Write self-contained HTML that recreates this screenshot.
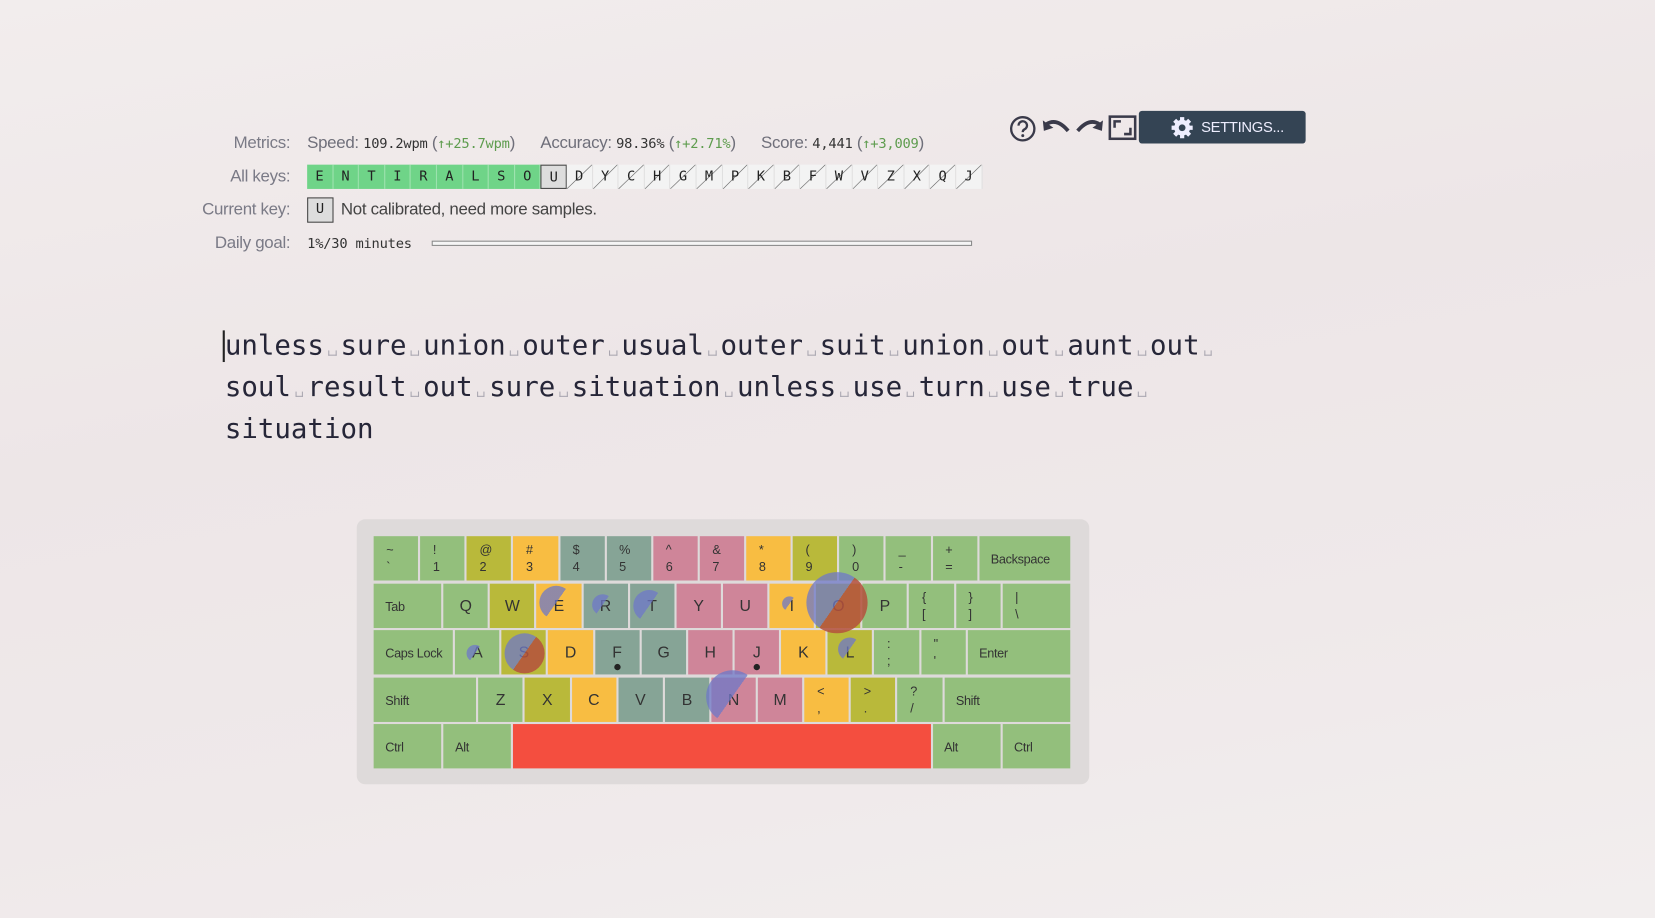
<!DOCTYPE html>
<html><head><meta charset="utf-8"><style>
html,body{margin:0;padding:0;width:1655px;height:918px;overflow:hidden;background:#efe9ea;}
#w{position:absolute;left:0;top:0;width:1568px;height:870px;transform:scale(1.05548);transform-origin:0 0;
background:linear-gradient(170deg,#f2eded 0%,#ede6e7 40%,#efe9ea 70%,#f2eeee 100%);font-family:"Liberation Sans",sans-serif;}
.lbl{position:absolute;right:1293px;font-size:16px;color:#7a7a86;white-space:nowrap;letter-spacing:-0.3px;}
.row{position:absolute;left:291px;font-size:15px;color:#6f6f7a;white-space:nowrap;letter-spacing:-0.3px;}
.mono{font-family:"DejaVu Sans Mono","Liberation Mono",monospace;font-size:13px;color:#333;letter-spacing:-0.2px;}
.g{color:#5e9c4e}
.k{position:absolute;top:156px;width:24.5px;height:23px;box-sizing:border-box;font-family:"DejaVu Sans Mono",monospace;font-size:13px;line-height:23px;text-align:center;color:#222;}
.kg{background:#6fd488;border-right:1px solid #9fe3b0;}
.kh{background:linear-gradient(to bottom right,#f3f3f3 calc(50% - 0.6px),#666 50%,#f3f3f3 calc(50% + 0.6px));border-right:1px solid #e0e0e0;}
.ku{background:#ddd;border:1px solid #444;}
#txt{position:absolute;left:213px;top:309px;font-family:"DejaVu Sans Mono",monospace;font-size:26px;line-height:39.3px;color:#262638;white-space:pre;}
.s{display:inline-block;width:15.65px;height:10px;position:relative;}
.s:after{content:"";position:absolute;left:4px;right:4px;bottom:-1px;height:4px;border:1.5px solid #a9a6b0;border-top:none;}
#kb{position:absolute;left:338px;top:492px;width:694px;height:251px;background:#dedada;border-radius:8px;}
.key{position:absolute;height:42px;box-sizing:border-box;font-family:"Liberation Sans",sans-serif;color:#333;overflow:hidden;}
.key .c{position:absolute;left:0;right:0;top:1px;bottom:0;text-align:center;line-height:42px;font-size:15px;}
.key .t{position:absolute;left:11px;top:15px;font-size:12px;letter-spacing:-0.3px;}
.key .d{position:absolute;left:12px;top:5px;font-size:12px;line-height:16px;}
.G{background:#93bf7c}.O{background:#b9b93a}.Y{background:#f8bd42}.T{background:#86a496}.P{background:#cf8599}.R{background:#f44e3f}
.pie{position:absolute;border-radius:50%;}
.m{position:absolute;top:127px;font-size:16px;color:#6f6f7a;white-space:nowrap;letter-spacing:-0.3px}
</style></head><body><div id="w">

<div class="lbl" style="top:127px">Metrics:</div>
<div class="m" style="left:291px">Speed: <span class="mono">109.2wpm</span> (<span class="g mono">↑+25.7wpm</span>)</div>
<div class="m" style="left:512px">Accuracy: <span class="mono">98.36%</span> (<span class="g mono">↑+2.71%</span>)</div>
<div class="m" style="left:721px">Score: <span class="mono">4,441</span> (<span class="g mono">↑+3,009</span>)</div>
<div class="lbl" style="top:159px">All keys:</div>
<div id="keys"></div>
<div class="lbl" style="top:190px">Current key:</div>
<div class="k ku" style="left:291px;top:187px;height:24px;line-height:22px">U</div>
<div class="row" style="left:323px;top:190px;font-size:16px;color:#444">Not calibrated, need more samples.</div>
<div class="lbl" style="top:222px">Daily goal:</div>
<div class="row mono" style="top:224px">1%/30 minutes</div>
<div style="position:absolute;left:409px;top:228px;width:512px;height:5px;box-sizing:border-box;border:1px solid #888;background:#f5f5f5"></div>

<svg style="position:absolute;left:956px;top:109px" width="26" height="26" viewBox="0 0 26 26"><circle cx="13" cy="13" r="11" fill="none" stroke="#3a3a4a" stroke-width="2.2"/><path d="M9 10a4 4 0 1 1 5.5 3.6c-1.2.6-1.5 1.2-1.5 2.6" fill="none" stroke="#3a3a4a" stroke-width="2.2"/><circle cx="13" cy="19.5" r="1.4" fill="#3a3a4a"/></svg>
<svg style="position:absolute;left:987px;top:112px" width="28" height="20" viewBox="0 0 28 20"><path d="M4 6 Q14 -1 25 12" fill="none" stroke="#3a3a4a" stroke-width="3.5"/><path d="M1 2 L2 12 L11 9 Z" fill="#3a3a4a"/></svg>
<svg style="position:absolute;left:1018px;top:112px" width="28" height="20" viewBox="0 0 28 20"><path d="M24 6 Q14 -1 3 12" fill="none" stroke="#3a3a4a" stroke-width="3.5"/><path d="M27 2 L26 12 L17 9 Z" fill="#3a3a4a"/></svg>
<svg style="position:absolute;left:1050px;top:109px" width="27" height="24" viewBox="0 0 27 24"><rect x="1.5" y="1.5" width="24" height="21" fill="none" stroke="#3a3a4a" stroke-width="2.4"/><path d="M6 12V6h6M21 12v6h-6" fill="none" stroke="#3a3a4a" stroke-width="2.4"/></svg>
<div style="position:absolute;left:1079px;top:105px;width:158px;height:31px;background:#344454;border-radius:3px;color:#eef;font-size:14px;line-height:31px;letter-spacing:-0.3px">
<svg style="position:absolute;left:29px;top:4px" width="24" height="24" viewBox="0 0 24 24"><g fill="#eef"><circle cx="12" cy="12" r="7.5"/><g stroke="#eef" stroke-width="4"><path d="M12 2v20M2 12h20M4.9 4.9l14.2 14.2M19.1 4.9L4.9 19.1"/></g></g><circle cx="12" cy="12" r="3.2" fill="#344454"/></svg>
<span style="position:absolute;left:59px">SETTINGS...</span></div>

<div style="position:absolute;left:211px;top:313px;width:2px;height:30px;background:#222"></div>
<div id="txt">unless<i class="s"></i>sure<i class="s"></i>union<i class="s"></i>outer<i class="s"></i>usual<i class="s"></i>outer<i class="s"></i>suit<i class="s"></i>union<i class="s"></i>out<i class="s"></i>aunt<i class="s"></i>out<i class="s"></i>
soul<i class="s"></i>result<i class="s"></i>out<i class="s"></i>sure<i class="s"></i>situation<i class="s"></i>unless<i class="s"></i>use<i class="s"></i>turn<i class="s"></i>use<i class="s"></i>true<i class="s"></i>
situation</div>

<div id="kb"></div>
<div id="kk"></div>
</div>
<script>
var ks="ENTIRALSOUDYCHGMPKBFWVZXQJ".split(""),h="";
ks.forEach(function(c,i){var cl=i<9?"kg":(i==9?"ku":"kh");h+='<div class="k '+cl+'" style="left:'+(291+i*24.6)+'px">'+c+'</div>';});
document.getElementById("keys").innerHTML=h;
var U=44.13,X0=354,Y0=508,RH=44.5;
var rows=[
[["~","`",1,"G",1],["!","1",1,"G",1],["@","2",1,"O",1],["#","3",1,"Y",1],["$","4",1,"T",1],["%","5",1,"T",1],["^","6",1,"P",1],["&amp;","7",1,"P",1],["*","8",1,"Y",1],["(","9",1,"O",1],[")","0",1,"G",1],["_","-",1,"G",1],["+","=",1,"G",1],["Backspace","",2,"G",2]],
[["Tab","",1.5,"G",2],["Q","",1,"G",0],["W","",1,"O",0],["E","",1,"Y",0],["R","",1,"T",0],["T","",1,"T",0],["Y","",1,"P",0],["U","",1,"P",0],["I","",1,"Y",0],["O","",1,"O",0],["P","",1,"G",0],["{","[",1,"G",1],["}","]",1,"G",1],["|","\\",1.5,"G",1]],
[["Caps Lock","",1.75,"G",2],["A","",1,"G",0],["S","",1,"O",0],["D","",1,"Y",0],["F","",1,"T",0],["G","",1,"T",0],["H","",1,"P",0],["J","",1,"P",0],["K","",1,"Y",0],["L","",1,"O",0],[":",";",1,"G",1],["\"","'",1,"G",1],["Enter","",2.25,"G",2]],
[["Shift","",2.25,"G",2],["Z","",1,"G",0],["X","",1,"O",0],["C","",1,"Y",0],["V","",1,"T",0],["B","",1,"T",0],["N","",1,"P",0],["M","",1,"P",0],["&lt;",",",1,"Y",1],["&gt;",".",1,"O",1],["?","/",1,"G",1],["Shift","",2.75,"G",2]],
[["Ctrl","",1.5,"G",2],["Alt","",1.5,"G",2],["","",9,"R",0],["Alt","",1.5,"G",2],["Ctrl","",1.5,"G",2]]];
h="";
rows.forEach(function(r,ri){var x=X0;r.forEach(function(k){var w=k[2]*U-2;var inner;
if(k[4]==0)inner='<div class="c">'+k[0]+'</div>';else if(k[4]==1)inner='<div class="d">'+k[0]+'<br>'+k[1]+'</div>';else inner='<div class="t">'+k[0]+'</div>';
if(k[0]=="F"||k[0]=="J")inner+='<div style="position:absolute;left:'+(w/2-3)+'px;top:32px;width:6px;height:6px;border-radius:50%;background:#222"></div>';
h+='<div class="key '+k[3]+'" style="left:'+x+'px;top:'+(Y0+ri*RH)+'px;width:'+w+'px">'+inner+'</div>';x+=k[2]*U;});});
function pie(cx,cy,r,a,red){var bg=red?'conic-gradient(from 35deg,rgba(180,80,60,.85) 0 180deg,rgba(110,120,200,.75) 180deg 360deg)':'conic-gradient(from -145deg,rgba(110,120,200,.75) 0 '+a+'deg,transparent '+a+'deg)';
return '<div class="pie" style="left:'+(cx-r)+'px;top:'+(cy-r)+'px;width:'+(2*r)+'px;height:'+(2*r)+'px;background:'+bg+'"></div>';}
h+=pie(793,571,29,0,1)+pie(497,619,19,0,1)+pie(527,571,16,180)+pie(571,573,10,180)+pie(615,574,15,180)+pie(748,572,7,180)+pie(450,619,8,180)+pie(805,615,11,180)+pie(694,660,25,180);
document.getElementById("kk").innerHTML=h;
</script>
</body></html>
